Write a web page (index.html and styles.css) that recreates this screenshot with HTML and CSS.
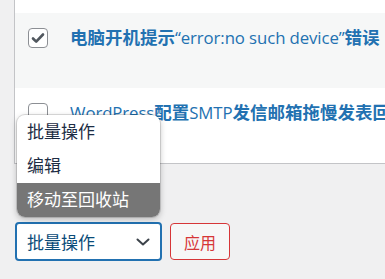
FILE: index.html
```html
<!DOCTYPE html>
<html>
<head>
<meta charset="utf-8">
<link rel="stylesheet" href="styles.css">
</head>
<body>
<div class="page">
  <div class="table">
    <div class="row row-top"></div>
    <div class="row alt">
      <span class="cb checked"><svg viewBox="0 0 20 20" width="20" height="20"><path d="M5 10.5l3.2 3.2L15 6.5" fill="none" stroke="#50575e" stroke-width="2.6" stroke-linecap="round" stroke-linejoin="round"/></svg></span>
      <a class="title">电脑开机提示<span class="reg">“error:no such device”</span>错误</a>
    </div>
    <div class="row">
      <span class="cb"></span>
      <a class="title"><span class="reg">WordPress</span>配置<span class="reg">SMTP</span>发信邮箱拖慢发表回复</a>
    </div>
  </div>
  <div class="tablenav">
    <div class="select">
      <span>批量操作</span>
      <svg class="chev" viewBox="0 0 14 8" width="14" height="8"><path d="M1.5 1.5L7 6.5l5.5-5" fill="none" stroke="#3c434a" stroke-width="2" stroke-linecap="round" stroke-linejoin="round"/></svg>
    </div>
    <button class="apply">应用</button>
  </div>
  <ul class="menu">
    <li>批量操作</li>
    <li>编辑</li>
    <li class="hl">移动至回收站</li>
  </ul>
</div>
</body>
</html>
```
FILE: styles.css
```css
html, body {
  margin: 0;
  padding: 0;
  background: #f0f0f1;
  font-family: "Open Sans", "Noto Sans CJK SC", sans-serif;
  overflow: hidden;
}
.page {
  position: relative;
  width: 385px;
  height: 279px;
  padding-left: 14px;
  box-sizing: border-box;
  overflow: hidden;
}
.table {
  border-left: 1px solid #c3c4c7;
  border-bottom: 1px solid #c3c4c7;
  background: #fff;
  width: 400px;
}
.row {
  height: 75px;
  box-sizing: border-box;
  display: flex;
  align-items: center;
  align-content: flex-start;
  padding: 14px 0 0 13px;
  white-space: nowrap;
  overflow: hidden;
  flex-wrap: wrap;
}
.row-top {
  height: 13px;
  padding: 0;
}
.alt {
  background: #f6f7f7;
}
.cb {
  width: 18px;
  height: 18px;
  border: 1px solid #8c8f94;
  border-radius: 4px;
  background: #fff;
  flex: none;
  position: relative;
}
.cb svg {
  position: absolute;
  left: -1px;
  top: -1px;
}
.title {
  margin-left: 22px;
  font-size: 17.5px;
  line-height: 20px;
  font-weight: 700;
  color: #2271b1;
  font-family: "Open Sans", "Noto Sans CJK SC", sans-serif;
}
.title .reg {
  font-weight: 400;
  font-size: 16.8px;
  letter-spacing: -0.1px;
}
.tablenav {
  display: flex;
  gap: 8px;
  margin-top: 58px;
  align-items: center;
}
.select {
  width: 147px;
  height: 39px;
  box-sizing: border-box;
  border: 2px solid #2271b1;
  border-radius: 4px;
  background: #fff;
  display: flex;
  align-items: center;
  justify-content: space-between;
  padding: 0 10px 0 10px;
  font-size: 17px;
  color: #0a4b78;
  margin-left: 1px;
}
.chev {
  margin-top: 1px;
}
.apply {
  width: 60px;
  height: 37px;
  box-sizing: border-box;
  border: 1px solid #d63638;
  border-radius: 4px;
  background: #f6f7f7;
  color: #d63638;
  font-size: 16px;
  font-family: "Open Sans", "Noto Sans CJK SC", sans-serif;
  padding: 0;
}
.menu {
  position: absolute;
  left: 17px;
  top: 115px;
  width: 143px;
  margin: 0;
  padding: 0;
  list-style: none;
  background: #fff;
  border-radius: 8px;
  overflow: hidden;
  box-shadow: 0 0 0 1px rgba(0,0,0,0.12), 0 2px 6px rgba(0,0,0,0.25);
}
.menu li {
  height: 34px;
  line-height: 34px;
  padding-left: 10px;
  font-size: 17px;
  color: #1d2d44;
}
.menu li.hl {
  background: #767676;
  color: #fff;
}
```
